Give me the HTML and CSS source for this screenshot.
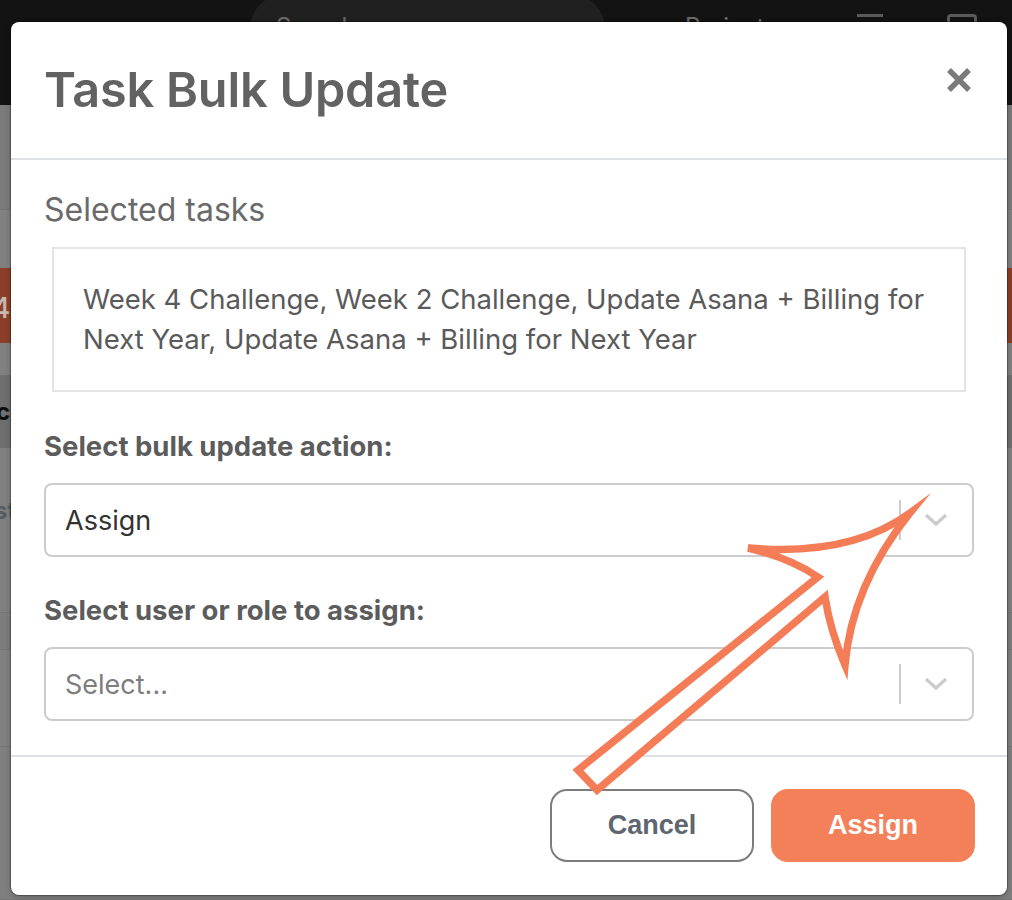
FILE: index.html
```html
<!DOCTYPE html>
<html lang="en">
<head>
<meta charset="utf-8">
<title>Task Bulk Update</title>
<link rel="stylesheet" href="styles.css">
</head>
<body>
<div class="app">
  <header class="topbar">
    <div class="search">Search</div>
    <div class="top-link">Projects</div>
    <div class="top-icon"></div>
    <div class="top-square"></div>
  </header>
  <div class="content">
    <div class="row r1"></div>
    <div class="row r2"></div>
    <div class="row r3"><span class="badge-num">4</span></div>
    <div class="row r4"></div>
    <div class="row r5"><span class="cut-bold">c</span></div>
    <div class="row r6"><span class="cut-gray">st</span></div>
    <div class="row r7"></div>
    <div class="row r8"></div>
    <div class="row r9"></div>
  </div>
</div>

<div class="modal" role="dialog" aria-labelledby="modal-title">
  <div class="modal-header">
    <h1 id="modal-title" class="modal-title">Task Bulk Update</h1>
    <button class="close-btn" aria-label="Close">
      <svg width="26" height="26" viewBox="0 0 26 26"><path d="M3 3 L23 23 M23 3 L3 23" stroke="#7a7a7a" stroke-width="5.5" stroke-linecap="butt" fill="none"/></svg>
    </button>
  </div>
  <div class="modal-body">
    <div class="section-title">Selected tasks</div>
    <div class="task-box">Week 4 Challenge, Week 2 Challenge, Update Asana + Billing for Next Year, Update Asana + Billing for Next Year</div>

    <label class="field-label">Select bulk update action:</label>
    <div class="select">
      <span class="select-value">Assign</span>
      <span class="select-sep"></span>
      <svg class="chev" width="24" height="16" viewBox="0 0 24 16"><path d="M2 3 L12 12 L22 3" stroke="#cccccc" stroke-width="3.2" fill="none"/></svg>
    </div>

    <label class="field-label">Select user or role to assign:</label>
    <div class="select">
      <span class="select-value placeholder">Select...</span>
      <span class="select-sep"></span>
      <svg class="chev" width="24" height="16" viewBox="0 0 24 16"><path d="M2 3 L12 12 L22 3" stroke="#cccccc" stroke-width="3.2" fill="none"/></svg>
    </div>
  </div>
  <div class="modal-footer">
    <button class="btn btn-cancel">Cancel</button>
    <button class="btn btn-assign">Assign</button>
  </div>
</div>

<svg class="arrow" width="1012" height="900" viewBox="0 0 1012 900" aria-hidden="true">
  <path d="M910 513 C880 535 830 555 748 548 Q790 558 818 577 L578 770 L597 790 L825 597 Q830 630 845 665 Q852 585 910 513 Z" fill="#ffffff" stroke="#f47d57" stroke-width="7.5" stroke-linejoin="miter" stroke-miterlimit="12"/>
</svg>
</body>
</html>
```

FILE: styles.css
```css
* { box-sizing: border-box; }

html, body {
  margin: 0;
  padding: 0;
}

body {
  width: 1012px;
  height: 900px;
  overflow: hidden;
  position: relative;
  background: #808080;
  font-family: Inter, "Liberation Sans", sans-serif;
}

/* ---------- background app (dimmed) ---------- */
.app {
  width: 1012px;
  height: 900px;
  display: flex;
  flex-direction: column;
}

.topbar {
  height: 105px;
  background: #131313;
  display: flex;
  align-items: flex-start;
  padding-left: 250px;
  flex: none;
}

.search {
  width: 355px;
  height: 70px;
  border-radius: 35px;
  background: #202020;
  margin-top: -6px;
  color: #6a6a6a;
  font-size: 24px;
  padding: 18px 0 0 26px;
}

.top-link {
  margin-left: 80px;
  margin-top: 12px;
  color: #6a6a6a;
  font-size: 24px;
}

.top-icon {
  margin-left: 80px;
  margin-top: 14px;
  width: 26px;
  height: 20px;
  border-top: 3px solid #5a5a5a;
}

.top-square {
  margin-left: 64px;
  margin-top: 14px;
  width: 30px;
  height: 30px;
  border: 3px solid #5a5a5a;
  border-radius: 4px;
}

.content {
  flex: 1;
  display: flex;
  flex-direction: column;
}

.row {
  display: flex;
  align-items: center;
  flex: none;
  border-bottom: 1px solid #757575;
  overflow: hidden;
}

.r1 { height: 105px; background: #7b7b7b; }
.r2 { height: 58px; background: #808080; border-bottom: none; }
.r3 { height: 75px; background: #8b3f28; border-bottom: none; }
.r4 { height: 32px; background: #808080; border-bottom: none; }
.r5 { height: 73px; background: #6f6f6f; border-bottom: none; }
.r6 { height: 165px; background: #808080; }
.r7 { height: 37px; background: #7d7d7d; }
.r8 { height: 97px; background: #808080; }
.r9 { flex: 1; background: #7f7f7f; }

.badge-num {
  color: #c8b8b0;
  font-size: 28px;
  font-weight: 500;
  margin-left: -8px;
  margin-top: 4px;
}

.cut-bold {
  color: #0d0d0d;
  font-weight: 700;
  font-size: 24px;
  margin-left: -4px;
}

.cut-gray {
  color: #555b60;
  font-weight: 700;
  font-size: 24px;
  margin-left: -6px;
  margin-top: -40px;
}

/* ---------- modal ---------- */
.modal {
  position: absolute;
  left: 11px;
  top: 22px;
  width: 996px;
  height: 873px;
  background: #ffffff;
  border-radius: 8px;
  box-shadow: 0 0 0 1px rgba(0, 0, 0, 0.25), 0 2px 6px rgba(0, 0, 0, 0.25);
  display: flex;
  flex-direction: column;
}

.modal-header {
  height: 138px;
  border-bottom: 2px solid #dee2e6;
  display: flex;
  align-items: center;
  justify-content: space-between;
  padding: 0 33px 0 33px;
  flex: none;
}

.modal-title {
  margin: 0;
  font-family: Inter, "Liberation Sans", sans-serif;
  font-size: 48.6px;
  line-height: 58px;
  font-weight: 600;
  color: #626262;
  letter-spacing: -0.2px;
}

.close-btn {
  border: none;
  background: none;
  padding: 0;
  width: 26px;
  height: 26px;
  margin-top: -20px;
  margin-right: 2px;
  display: flex;
}

.modal-body {
  padding: 30px 33px 34px 33px;
  display: flex;
  flex-direction: column;
  border-bottom: 2px solid #dee2e6;
  flex: none;
}

.section-title {
  font-size: 32px;
  line-height: 40px;
  color: #6a6a6a;
  font-weight: 400;
}

.task-box {
  margin: 17px 8px 0 8px;
  height: 145px;
  border: 2px solid #e4e4e4;
  padding: 30px 29px;
  font-size: 27.5px;
  line-height: 40px;
  color: #5a5a5a;
}

.field-label {
  display: block;
  margin-top: 38px;
  font-size: 27.5px;
  line-height: 32px;
  font-weight: 700;
  color: #5c5c5c;
}

.select + .field-label {
  margin-top: 37px;
}

.select {
  margin-top: 21px;
  height: 74px;
  border: 2px solid #cccccc;
  border-radius: 8px;
  display: flex;
  align-items: center;
  padding-left: 19px;
}

.select-value {
  flex: 1;
  font-size: 27px;
  color: #333333;
}

.select-value.placeholder {
  color: #7d7d7d;
}

.select-sep {
  width: 2px;
  height: 40px;
  background: #cccccc;
}

.chev {
  margin: 0 24px 0 23px;
}

.modal-footer {
  flex: 1;
  display: flex;
  justify-content: flex-end;
  align-items: flex-start;
  gap: 17px;
  padding: 32px 32px 0 0;
}

.btn {
  width: 204px;
  height: 73px;
  border-radius: 17px;
  font-family: "Liberation Sans", Arial, sans-serif;
  font-size: 27px;
  font-weight: 700;
}

.btn-cancel {
  background: #ffffff;
  border: 2px solid #7c7c7c;
  color: #5e6670;
}

.btn-assign {
  background: #f4805a;
  border: 2px solid #f4805a;
  color: #ffffff;
}

/* ---------- annotation arrow overlay ---------- */
.arrow {
  position: absolute;
  left: 0;
  top: 0;
  pointer-events: none;
}
```
